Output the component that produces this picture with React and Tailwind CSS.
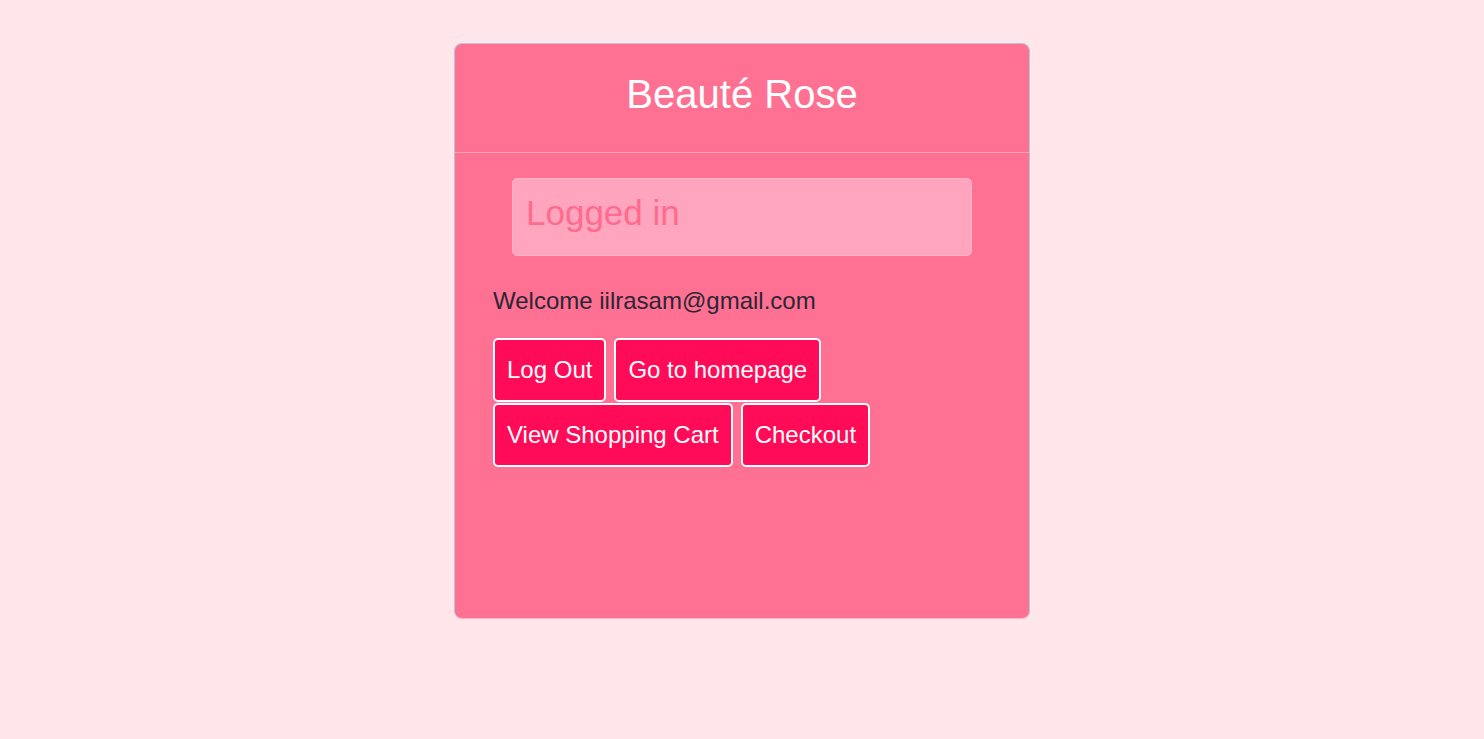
import React from "react";

const buttons = [
  "Log Out",
  "Go to homepage",
  "View Shopping Cart",
  "Checkout",
];

const App = () => {
  return (
    <div
      className="min-h-screen bg-[#ffe6ea] pt-[43px]"
      style={{ fontFamily: '"Liberation Sans", Arial, sans-serif' }}
    >
      <div className="mx-auto w-[576px] h-[576px] bg-[#ff7192] rounded-[8px] border border-[#b6c4dc] border-b-[#ffb3c4] overflow-hidden">
        {/* Header */}
        <div className="h-[109px] pb-2 flex items-center justify-center border-b border-[#ffa3ba]">
          <h1 className="text-[40px] leading-[46px] text-white">Beauté Rose</h1>
        </div>

        {/* Body */}
        <div className="px-[38px] pt-[25px]">
          <div className="mx-[19px] h-[78px] rounded-[5px] bg-[#ffa5bd] border border-[#ffb4c8] px-[13px] pt-[14px]">
            <p className="text-[35px] leading-[40px] text-[#ff6a8f]">Logged in</p>
          </div>

          <p className="mt-[27px] text-[24px] leading-[36px] text-[#2b2536]">
            Welcome iilrasam@gmail.com
          </p>

          <div className="mt-[19px] flex flex-wrap gap-x-2 gap-y-px">
            {buttons.map((label) => (
              <button
                key={label}
                className="bg-[#ff0b57] text-white text-[24px] leading-[36px] px-3 py-3 border-2 border-white rounded-[5px]"
              >
                {label}
              </button>
            ))}
          </div>
        </div>
      </div>
    </div>
  );
};

export default App;
